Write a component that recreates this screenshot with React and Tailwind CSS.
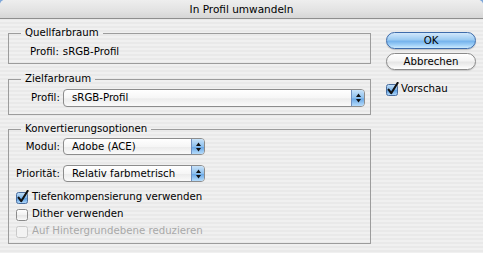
import React from "react";

function Check({ checked = false, disabled = false }) {
  return (
    <svg width="13" height="14" viewBox="0 0 13 14" className="shrink-0">
      <defs>
        <linearGradient id="cbBlue" x1="0" y1="0" x2="0" y2="1">
          <stop offset="0" stopColor="#c7e2f9" />
          <stop offset="0.5" stopColor="#7fb6ea" />
          <stop offset="0.55" stopColor="#5d9fe3" />
          <stop offset="1" stopColor="#b7dcfb" />
        </linearGradient>
        <linearGradient id="cbWhite" x1="0" y1="0" x2="0" y2="1">
          <stop offset="0" stopColor="#ffffff" />
          <stop offset="0.5" stopColor="#f1f1f1" />
          <stop offset="0.55" stopColor="#e6e6e6" />
          <stop offset="1" stopColor="#fbfbfb" />
        </linearGradient>
      </defs>
      <rect
        x="0.5"
        y="2.5"
        width="11"
        height="11"
        rx="2"
        fill={checked ? "url(#cbBlue)" : disabled ? "#f3f3f3" : "url(#cbWhite)"}
        stroke={checked ? "#4a6d9e" : disabled ? "#c9c9c9" : "#8a8a8a"}
      />
      {checked && (
        <path
          d="M2.6 7.6 L5.2 11.2 L11.6 1"
          fill="none"
          stroke="#111"
          strokeWidth="2.1"
          strokeLinecap="round"
          strokeLinejoin="round"
        />
      )}
    </svg>
  );
}

function Popup({ text, className = "" }) {
  return (
    <div
      className={
        "h-[17px] flex items-stretch rounded-[4px] border border-[#8c8c8c] bg-[linear-gradient(180deg,#ffffff_0%,#f6f6f6_50%,#ececec_55%,#fafafa_100%)] overflow-hidden " +
        className
      }
    >
      <div className="flex-1 pl-[8px] flex items-center whitespace-nowrap leading-[14px]">{text}</div>
      <div className="w-[13px] shrink-0 flex items-center justify-center border-l border-[#6f8fbf] bg-[linear-gradient(180deg,#c8e2f8_0%,#8dc0ee_50%,#6aa8e6_55%,#b6dcfb_100%)]">
        <svg width="5" height="10" viewBox="0 0 5 10">
          <polygon points="0,4 2.5,0.5 5,4" fill="#111" />
          <polygon points="0,6 2.5,9.5 5,6" fill="#111" />
        </svg>
      </div>
    </div>
  );
}

function Group({ title, className = "", children }) {
  return (
    <fieldset className={"border border-[#9c9c9c] m-0 p-0 " + className}>
      <legend className="ml-[12px] px-[4px] leading-[14px]">{title}</legend>
      {children}
    </fieldset>
  );
}

export default function App() {
  return (
    <div className="w-[483px] h-[253px] bg-[#7fa7d9] overflow-hidden font-['DejaVu_Sans',sans-serif] text-[10.2px] leading-[14px] text-black">
      <div className="h-full flex flex-col rounded-t-[5px] overflow-hidden bg-[repeating-linear-gradient(180deg,#f0f0f0_0px,#f0f0f0_2px,#e9e9e9_2px,#e9e9e9_4px)]">
        <div className="h-[19px] shrink-0 flex items-center justify-center border-b border-[#8e8e8e] bg-[linear-gradient(180deg,#eeeeee_0%,#e2e2e2_60%,#d6d6d6_100%)] text-[10.5px]">
          In Profil umwandeln
        </div>
        <div className="flex flex-1 pl-[8px]">
          <div className="w-[363px] flex flex-col">
            <Group title="Quellfarbraum" className="mt-[7px]">
              <div className="pt-[5px] pb-[4px] pl-[21px] flex gap-[4px]">
                <span>Profil:</span>
                <span>sRGB-Profil</span>
              </div>
            </Group>
            <Group title="Zielfarbraum" className="mt-[8px]">
              <div className="pt-[3px] pb-[7px] pl-[22px] pr-[5px] flex items-center gap-[3px]">
                <span className="w-[29px]">Profil:</span>
                <Popup text="sRGB-Profil" className="flex-1 h-[18px]" />
              </div>
            </Group>
            <Group title="Konvertierungsoptionen" className="mt-[7px]">
              <div className="pt-[2px] pb-[4px] pl-[7px] flex flex-col">
                <div className="flex items-center gap-[3px]">
                  <span className="w-[44px] text-right">Modul:</span>
                  <Popup text="Adobe (ACE)" className="w-[142px]" />
                </div>
                <div className="flex items-center gap-[3px] mt-[10px]">
                  <span className="w-[44px] text-right">Priorität:</span>
                  <Popup text="Relativ farbmetrisch" className="w-[142px]" />
                </div>
                <div className="mt-[6px] h-[17px] flex items-center gap-[3px]">
                  <Check checked />
                  <span>Tiefenkompensierung verwenden</span>
                </div>
                <div className="h-[17px] flex items-center gap-[3px]">
                  <Check />
                  <span>Dither verwenden</span>
                </div>
                <div className="h-[17px] flex items-center gap-[3px]">
                  <Check disabled />
                  <span className="text-[#a8a8a8]">Auf Hintergrundebene reduzieren</span>
                </div>
              </div>
            </Group>
          </div>
          <div className="ml-[15px] pt-[13px] flex flex-col">
            <button className="w-[90px] h-[17px] rounded-full border border-[#3e6cab] bg-[linear-gradient(180deg,#d2e8fb_0%,#9ccbf2_45%,#75b3ec_55%,#9fd0f8_80%,#cdeafd_100%)] flex items-center justify-center leading-[14px] text-[10.2px] shadow-[0_1px_1px_rgba(0,0,0,0.2)]">
              OK
            </button>
            <button className="mt-[4px] w-[90px] h-[17px] rounded-full border border-[#8a8a8a] bg-[linear-gradient(180deg,#ffffff_0%,#f4f4f4_45%,#e6e6e6_55%,#f3f3f3_80%,#ffffff_100%)] flex items-center justify-center leading-[14px] text-[10.2px] shadow-[0_1px_1px_rgba(0,0,0,0.15)]">
              Abbrechen
            </button>
            <div className="mt-[12px] h-[14px] flex items-center gap-[2px]">
              <Check checked />
              <span>Vorschau</span>
            </div>
          </div>
        </div>
      </div>
    </div>
  );
}
